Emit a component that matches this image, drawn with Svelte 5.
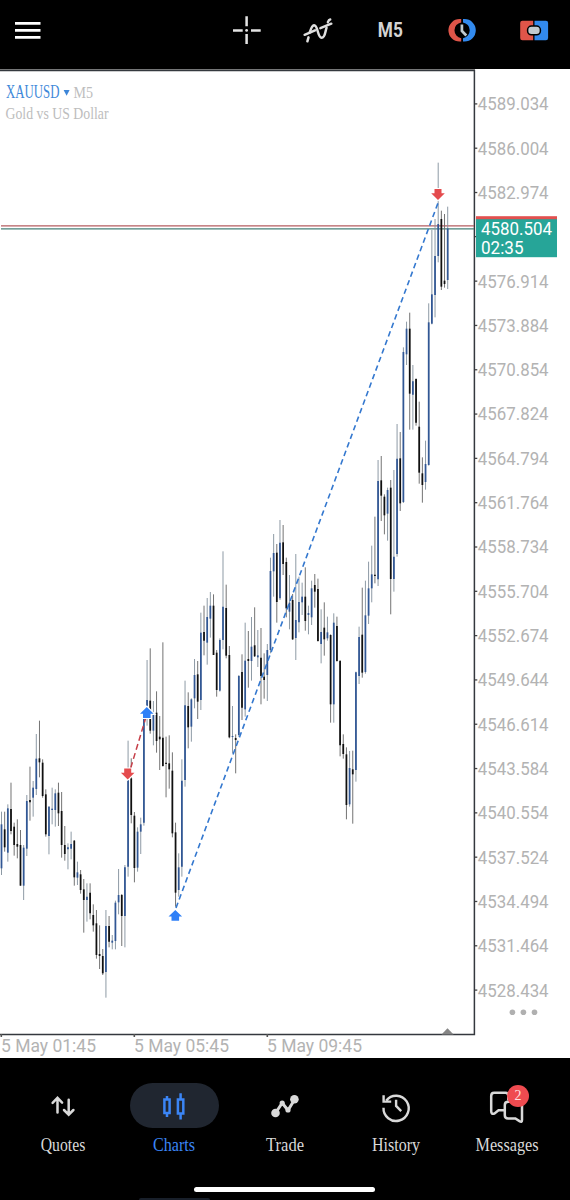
<script>
  // Each run holds candles as [high, body top, body bottom, low, rising], in thirds of a pixel below its base.
  const runs = [
    { base: 710, rows: [
      [305,343,475,495,1],[305,358,412,425,0],[283,295,428,455,1],[218,297,363,373,0],[338,350,405,437,0],
      [328,402,410,445,0],[360,405,527,527,0],[405,413,527,570,1],[255,273,416,438,1],[170,270,277,332,0],
      [213,233,263,320,1],[72,146,237,255,1],[32,145,157,202,0],[148,158,258,263,0],[238,253,373,380,0],
      [288,290,378,433,1],[233,296,300,343,1],[238,250,300,350,1],[218,248,310,348,0],[246,303,405,443,0],
      [348,405,432,452,0],[400,412,418,478,1],[365,402,416,448,1],[390,392,502,527,0],[455,487,503,525,1],
      [480,493,540,551,0],[507,538,570,668,0],[520,560,570,635,1],[520,548,610,628,0],[583,615,646,665,0],
      [600,640,735,746,0],[646,732,738,777,0],[717,738,790,795,0],[600,648,786,863,1],[618,648,695,712,0],
      [675,692,698,718,1],[572,578,693,718,1],[477,555,577,613,1],[552,555,618,708,0],[465,472,618,712,1]
    ] },
    { base: 630, rows: [
      [332,440,710,740,1],[385,445,555,580,0],[546,557,714,757,0],[592,605,713,725,1],[563,583,605,672,1],
      [265,265,578,587,1],[90,210,265,287,1],[55,212,302,311,0],[213,250,302,346,1],[184,248,333,368,0],
      [258,320,328,420,0],[37,323,408,410,0],[320,398,402,502,0],[316,400,418,476,0],[367,422,610,622,0],
      [578,607,788,830,0],[670,712,780,800,1],[388,452,710,740,1],[152,226,450,470,1],[187,228,292,355,0],
      [205,208,290,335,1],[87,135,205,235,1],[93,133,215,267,0]
    ] },
    { base: 540, rows: [
      [218,278,480,510,1],[197,276,302,346,0],[174,231,308,374,1],[156,197,236,293,1],[163,197,345,345,0],
      [330,338,450,470,0],[295,300,452,455,1],[34,200,300,328,1],[134,204,347,355,0],[318,345,592,595,0],
      [498,588,591,640,1],[583,594,600,700,0],[405,408,585,590,1],[343,396,503,540,0],[248,362,508,530,1],
      [273,357,363,443,0],[231,320,363,422,1],[202,316,349,351,0],[270,346,352,381,1],[264,353,408,493,0],
      [340,410,420,476,0],[312,330,405,483,1]
    ] },
    { base: 510, rows: [
      [143,183,420,430,1],[72,129,184,260,1],[102,128,276,338,0],[30,98,265,270,1],[45,97,162,195,0],
      [143,156,295,322,0],[195,278,305,358,1],[252,270,388,390,0],[132,330,384,450,1],[200,276,337,367,1],
      [218,260,277,315,1],[172,260,333,362,0],[287,309,315,373,1],[212,235,322,345,1],[192,225,245,293,0],
      [206,237,393,395,0],[298,366,402,460,1],[277,353,388,437,0],[320,367,385,392,1],[373,375,583,638,0],
      [310,338,583,638,1],[320,348,453,455,0],[450,453,706,739,0],[673,702,732,746,0],[712,733,885,928,0],
      [723,774,883,890,1],[722,778,793,941,0],[485,487,780,815,1],[350,381,498,522,1],[233,374,488,503,0],
      [212,316,486,491,1],[155,235,317,342,1],[107,193,235,277,1],[20,194,198,220,0]
    ] },
    { base: 300, rows: [
      [480,543,838,858,1],[468,541,587,663,0],[583,590,646,703,0],[563,570,641,722,1],[540,563,837,943,0],
      [510,770,837,875,1],[372,476,762,770,1],[396,475,610,633,0],[142,156,606,609,1],[65,86,163,195,1],
      [38,86,281,389,0],[195,244,284,389,1],[235,237,368,377,0],[305,380,518,551,0],[472,520,555,608,0],
      [422,492,546,569,1],[10,67,495,497,1]
    ] },
    { base: 150, rows: [
      [240,433,521,523,1],[207,318,435,502,1],[38,222,318,337,1],[182,207,410,420,0],[192,392,402,413,0],[170,235,390,417,1]
    ] }
  ];
  const candles = runs
    .flatMap(({ base, rows }) => rows.map(([h, t, b, l, up]) => ({ h: base + h / 3, t: base + t / 3, b: base + b / 3, l: base + l / 3, up })))
    .map((c, i) => ({ ...c, x: 1.5 + i * 3.1645 }));

  const prices = Array.from({ length: 21 }, (_, i) => ({ y: 103.9 + i * 44.31, text: (4589.034 - i * 3.03).toFixed(3) })).filter((p, i) => i !== 3);
  const times = [
    { x: 1.3, text: '5 May 01:45' },
    { x: 134.3, text: '5 May 05:45' },
    { x: 267.3, text: '5 May 09:45' }
  ];
  const tabs = ['Quotes', 'Charts', 'Trade', 'History', 'Messages'];
  const widths = [44.5, 42, 38, 48, 63];
</script>

<div class="app">
  <header>
    <svg width="570" height="69" viewBox="0 0 570 69" fill="none">
      <path d="M15 23.4h25.5M15 30.4h25.5M15 37.3h25.5" stroke="#fff" stroke-width="2.8" />
      <g stroke="#e4e4e4" stroke-width="2.5">
        <path d="M246.6 16.3v10M246.6 34v10M233 30.4h9.7M251 30.4h9.7" />
        <circle cx="246.6" cy="30.4" r="1.4" fill="#e4e4e4" stroke="none" />
      </g>
      <g stroke="#dedede" stroke-width="2.5" stroke-linecap="round">
        <path d="M304.6 34.8L315 30.4M320.4 28.2L331.3 23.7" />
        <path d="M307.4 41.3L308.5 37.4" />
        <path d="M309.8 32.4C311 28.4 311.8 25.4 314.1 25.2C318 25 317.4 37.5 321.6 37.8C325.2 38 325.2 31.4 326.5 27.8" />
        <path d="M327.9 22.2C328.5 20.5 329 19.7 330.2 19.5" />
      </g>
      <text x="377.8" y="37.2" textLength="25" lengthAdjust="spacingAndGlyphs" class="frame">M5</text>
      <path d="M461.2 19.1H459.6A11.2 11.2 0 0 0 459.6 41.5H461.2V38.2A8 8 0 0 1 461.2 22.4z" fill="#df5549" />
      <path d="M463 19.1H464.6A11.2 11.2 0 0 1 464.6 41.5H463V38.2A8 8 0 0 0 463 22.4z" fill="#328aee" />
      <path d="M461.9 24.6v6.3l4.4 4.6" stroke="#bfcad0" stroke-width="2.7" />
      <path d="M533.2 20.8h-10.8a2.2 2.2 0 0 0-2.2 2.2v15a2.2 2.2 0 0 0 2.2 2.2h10.8z" fill="#df5549" />
      <path d="M534.5 20.8h11.4a2.2 2.2 0 0 1 2.2 2.2v15a2.2 2.2 0 0 1-2.2 2.2h-11.4z" fill="#328aee" />
      <rect x="527.6" y="26.1" width="12.8" height="8.7" rx="3.8" fill="#c1cad0" stroke="#000" stroke-width="1.5" />
    </svg>
  </header>

  <main>
    <svg width="570" height="989" viewBox="0 69 570 989">
      <path d="M0 69.5H475" stroke="#8b8b8b" />
      <path d="M0 70.5H474.4V1034.4H0" fill="none" stroke="#34383e" stroke-width="1.5" />
      <path d="M1 225.8H474" stroke="#b55d61" stroke-width="1.2" />
      <path d="M1 228.8H474" stroke="#478078" stroke-width="1.2" />

      {#each candles as c}
        <path d="M{c.x} {c.h}V{c.l}" stroke={c.up ? '#8795a0' : '#6c6c6c'} stroke-width="0.95" />
        <path d="M{c.x} {c.t}V{c.b}" stroke={c.up ? '#315795' : '#101010'} stroke-width="1.75" />
      {/each}

      <path d="M130.7 768L146 717" stroke="#c63f49" stroke-width="1.5" stroke-dasharray="6 3.5" />
      <path d="M176 908L438 203" stroke="#3478cf" stroke-width="1.6" stroke-dasharray="5.5 3.6" />
      {#each [[127.7, 774], [438, 194.5]] as [x, y]}
        <path class="marker" d="M{x - 3.5} {y - 5.4}h7v4.2h3.3L{x} {y + 5.4}L{x - 6.8} {y - 1.2}h3.3z" fill="#e44b4d" />
      {/each}
      {#each [[146.8, 712.6], [175.3, 915.5]] as [x, y]}
        <path class="marker" d="M{x - 3.8} {y + 5.3}h7.6v-4.2h3L{x} {y - 5.6}L{x - 6.8} {y + 1.1}h3z" fill="#2f80f7" />
      {/each}
      <path d="M441.5 1034.4L447.5 1028.3L453.6 1034.4z" fill="#858585" />

      <text x="6" y="98.2" textLength="53.5" lengthAdjust="spacingAndGlyphs" class="sym">XAUUSD</text>
      <path d="M63.6 90h6l-3 5.8z" fill="#3d86d8" />
      <text x="73.5" y="98.2" textLength="19.5" lengthAdjust="spacingAndGlyphs" class="sub">M5</text>
      <text x="5.5" y="119" textLength="103" lengthAdjust="spacingAndGlyphs" class="sub">Gold vs US Dollar</text>

      {#each prices as p}
        <path d="M475 {p.y}h2.3" stroke="#444" stroke-width="1.3" />
        <text x="477.8" y={p.y + 6.4} textLength="70.8" lengthAdjust="spacingAndGlyphs" class="axis">{p.text}</text>
      {/each}
      {#each times as t}
        <path d="M{t.x} 1034v3" stroke="#555" stroke-width="1.6" />
        <text x={t.x - 0.3} y="1052.2" textLength="95" lengthAdjust="spacingAndGlyphs" class="axis">{t.text}</text>
      {/each}
      <path d="M475 236.6h2" stroke="#444" stroke-width="1.3" />

      <rect x="476" y="216.2" width="81" height="10" fill="#e2504f" />
      <rect x="476" y="219.2" width="81" height="38" fill="#26a598" />
      <text x="481" y="234.8" textLength="71" lengthAdjust="spacingAndGlyphs" class="tag">4580.504</text>
      <text x="481" y="254" textLength="42.5" lengthAdjust="spacingAndGlyphs" class="tag">02:35</text>
      {#each [512.4, 523.4, 534.5] as x}
        <circle cx={x} cy="1012.3" r="2.8" fill="#b0b0b0" />
      {/each}
    </svg>
  </main>

  <nav>
    {#each tabs as tab, i}
      <div class="tab" class:active={i === 1}>
        <div class="pill">
          <svg width="48" height="44" viewBox="-24 -22 48 44" fill="none" stroke="currentColor" stroke-width="2.5">
            {#if i === 0}
              <path d="M-5.5 6.5V-7.5M-10.4 -3.2L-5.5 -8.1L-.9 -3.4M5.7 -6.3V7.7M1 4L5.7 8.7L10.4 4" stroke-linecap="round" />
            {:else if i === 1}
              <path d="M-9.6 -6.4h5.2V7h-5.2zM3.9 -6.4h5.4V7.4H3.9zM-7 -10v3M-7 8v3M6.6 -12.8v6M6.6 8v5.5" />
            {:else if i === 2}
              <path d="M-9.5 7L-2.8 -3L3 4.2L9.5 -6.3" stroke-width="3" stroke-linejoin="round" />
              <g fill="currentColor" stroke="none"><circle cx="-9.5" cy="7" r="4.3" /><circle cx="-2.8" cy="-2.9" r="2.6" /><circle cx="3" cy="4" r="2.6" /><circle cx="9.4" cy="-6.8" r="4.3" /></g>
            {:else if i === 3}
              <path d="M-9.7 -5.6A12.6 12.6 0 1 1 -12.5 1.8M-12.4 -10.8V-4.4H-4.8M.1 -6.3V-.1L5.2 5.1" stroke-width="2.4" />
            {:else}
              <path d="M-2 4.8H-8.5L-12.7 8.2Q-15.8 9.3 -15.8 5.5V-9.5Q-15.8 -12.6 -12.8 -12.6H-1.5Q1.3 -12.6 1.3 -9.5V-5" transform="translate(0 -.6)" />
              <path d="M1.3 -4.2H12Q15 -4.2 15 -1V14Q15 16.5 12.8 15.4L8.4 12.5H1Q-2.2 12.5 -2.2 9.3V-1Q-2.2 -4.2 1.3 -4.2z" fill="#000" />
            {/if}
          </svg>
          {#if i === 4}<span class="badge">2</span>{/if}
        </div>
        <svg class="label" width="80" height="26" viewBox="0 0 80 26"><text x="40" y="17.6" text-anchor="middle" textLength={widths[i]} lengthAdjust="spacingAndGlyphs">{tab}</text></svg>
      </div>
    {/each}
    <div class="home"></div>
    <div class="edge"></div>
  </nav>
</div>

<style>
  .app { width: 570px; height: 1200px; display: flex; flex-direction: column; background: #fff; overflow: hidden; font-family: "Liberation Serif", serif; }
  svg { display: block; }
  header { height: 69px; background: #000; }
  main { height: 989px; }
  .marker { stroke: #fff; stroke-width: 2.4px; paint-order: stroke; }
  .frame { font: 700 20.5px Roboto, sans-serif; fill: #d4d4d4; }
  .axis { font: 17.7px Roboto, sans-serif; fill: #b3b3b3; }
  .tag { font: 17.7px Roboto, sans-serif; fill: #fff; }
  .sym { font-size: 18px; fill: #3e88d9; }
  .sub { font-size: 17.2px; fill: #bdbdbd; }
  nav { position: relative; height: 142px; box-sizing: border-box; padding: 25px 8px 0; display: grid; grid-template-columns: repeat(5, 1fr); background: #000; }
  .tab { display: flex; flex-direction: column; align-items: center; color: #d9d9d9; }
  .pill { position: relative; width: 89px; height: 45px; display: flex; align-items: center; justify-content: center; border-radius: 23px; }
  .active { color: #3b85f5; }
  .active .pill { background: #202630; }
  .label { margin-top: 5px; }
  .label text { font-size: 18px; fill: currentColor; }
  .badge { position: absolute; left: 45px; top: 2px; width: 22px; height: 22px; border-radius: 50%; background: #ef4b50; color: #ffe1e1; font-size: 14px; line-height: 22px; text-align: center; }
  .home { position: absolute; left: 194px; top: 129px; width: 181px; height: 5px; border-radius: 3px; background: #fff; }
  .edge { position: absolute; left: 139px; bottom: 0; width: 71px; height: 2px; border-radius: 4px 4px 0 0; background: #181f2a; }
</style>
